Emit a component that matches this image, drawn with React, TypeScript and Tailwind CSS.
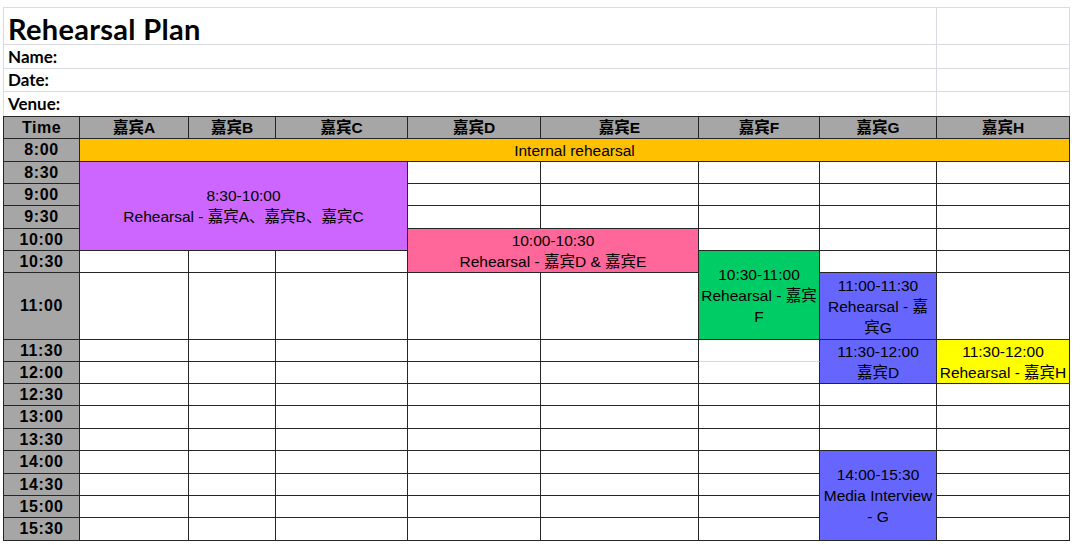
const COL = ['', 'col-start-1', 'col-start-2', 'col-start-3', 'col-start-4', 'col-start-5', 'col-start-6', 'col-start-7', 'col-start-8', 'col-start-9'];
const ROW = ['', 'row-start-1', 'row-start-2', 'row-start-3', 'row-start-4', 'row-start-5', 'row-start-6', 'row-start-7', 'row-start-8', 'row-start-9', 'row-start-10', 'row-start-11', 'row-start-12', 'row-start-13', 'row-start-14', 'row-start-15', 'row-start-16', 'row-start-17'];

const guests = ['嘉宾A', '嘉宾B', '嘉宾C', '嘉宾D', '嘉宾E', '嘉宾F', '嘉宾G', '嘉宾H'];
const times = ['8:00', '8:30', '9:00', '9:30', '10:00', '10:30', '11:00', '11:30', '12:00', '12:30', '13:00', '13:30', '14:00', '14:30', '15:00', '15:30'];

interface Block {
  c: number;
  cs: number;
  r: number;
  rs: number;
  cls: string;
  lines: string[];
}

// r/c are grid lines: row 1 = header, row 2 = 8:00 ...
const blocks: Block[] = [
  { c: 2, cs: 8, r: 2, rs: 1, cls: 'col-start-2 col-span-8 row-start-2 bg-[#ffc000]', lines: ['Internal rehearsal'] },
  { c: 2, cs: 3, r: 3, rs: 4, cls: 'col-start-2 col-span-3 row-start-3 row-span-4 bg-[#cc66ff]', lines: ['8:30-10:00', 'Rehearsal - 嘉宾A、嘉宾B、嘉宾C'] },
  { c: 5, cs: 2, r: 6, rs: 2, cls: 'col-start-5 col-span-2 row-start-6 row-span-2 bg-[#ff6699]', lines: ['10:00-10:30', 'Rehearsal - 嘉宾D & 嘉宾E'] },
  { c: 7, cs: 1, r: 7, rs: 2, cls: 'col-start-7 row-start-7 row-span-2 bg-[#00cc66]', lines: ['10:30-11:00', 'Rehearsal - 嘉宾F'] },
  { c: 8, cs: 1, r: 8, rs: 1, cls: 'col-start-8 row-start-8 bg-[#6666ff]', lines: ['11:00-11:30', 'Rehearsal - 嘉宾G'] },
  { c: 8, cs: 1, r: 9, rs: 2, cls: 'col-start-8 row-start-9 row-span-2 bg-[#6666ff]', lines: ['11:30-12:00', '嘉宾D'] },
  { c: 9, cs: 1, r: 9, rs: 2, cls: 'col-start-9 row-start-9 row-span-2 bg-[#ffff00] whitespace-nowrap overflow-hidden', lines: ['11:30-12:00', 'Rehearsal - 嘉宾H'] },
  { c: 8, cs: 1, r: 14, rs: 4, cls: 'col-start-8 row-start-14 row-span-4 bg-[#6666ff]', lines: ['14:00-15:30', 'Media Interview - G'] },
];

const taken = (r: number, c: number) =>
  blocks.some((b) => r >= b.r && r < b.r + b.rs && c >= b.c && c < b.c + b.cs);

const cellFont = { fontFamily: '"Liberation Sans", "Noto Sans CJK SC", Arial, sans-serif' };

export default function App() {
  const empties: { r: number; c: number }[] = [];
  for (let r = 2; r <= 17; r++) {
    for (let c = 2; c <= 9; c++) {
      if (!taken(r, c)) empties.push({ r, c });
    }
  }

  return (
    <div className="w-[1080px] h-[545px] bg-white pl-[3px] pt-[7px] text-black" style={cellFont}>
      {/* Sheet heading */}
      <div className="w-[1067px] border-l border-t border-[#dadae3] font-['Lato','Noto_Sans_CJK_SC',sans-serif]">
        <div className="grid grid-cols-[933px_133px]">
          <div className="h-[37px] border-r border-b border-[#dadae3] pl-[4px] flex items-end pb-[1px] text-[29px] font-bold leading-none tracking-[0.3px]">
            Rehearsal Plan
          </div>
          <div className="h-[37px] border-r border-b border-[#dadae3]"></div>
          <div className="h-[24px] border-r border-b border-[#dadae3] pl-[4px] flex items-center text-[17px] font-bold">Name:</div>
          <div className="h-[24px] border-r border-b border-[#dadae3]"></div>
          <div className="h-[23px] border-r border-b border-[#dadae3] pl-[4px] flex items-center text-[17px] font-bold">Date:</div>
          <div className="h-[23px] border-r border-b border-[#dadae3]"></div>
          <div className="h-[24px] border-r border-[#dadae3] pl-[4px] flex items-center text-[17px] font-bold">Venue:</div>
          <div className="h-[24px] border-r border-[#dadae3]"></div>
        </div>
      </div>

      {/* Schedule grid */}
      <div className="w-[1067px] grid grid-cols-[76px_109px_87px_132px_133px_158px_121px_117px_133px] grid-rows-[22px_23px_22px_22px_23px_22px_22px_67px_22px_22px_22px_23px_22px_23px_22px_22px_23px] border-l border-t border-[#262626]">
        <div className="col-start-1 row-start-1 bg-[#a6a6a6] border-r border-b border-[#262626] flex items-center justify-center text-[16px] font-bold tracking-[0.5px]">
          Time
        </div>
        {guests.map((g, i) => (
          <div
            key={g}
            className={`${COL[i + 2]} row-start-1 bg-[#a6a6a6] border-r border-b border-[#262626] flex items-center justify-center text-[15.5px] font-bold`}
          >
            {g}
          </div>
        ))}

        {times.map((t, i) => (
          <div
            key={t}
            className={`col-start-1 ${ROW[i + 2]} bg-[#a6a6a6] border-r border-b border-[#262626] flex items-center justify-center text-[16px] font-bold tracking-[0.6px]`}
          >
            {t}
          </div>
        ))}

        {empties.map(({ r, c }) => (
          <div
            key={`${r}-${c}`}
            className={`${COL[c]} ${ROW[r]} bg-white border-r border-b ${
              c === 7 && r === 9 ? 'border-r-[#262626] border-b-[#d9d9d9]' : 'border-[#262626]'
            }`}
          ></div>
        ))}

        {blocks.map((b) => (
          <div
            key={b.cls}
            className={`${b.cls} border-r border-b border-[#262626] flex flex-col items-center justify-center text-center px-[2px] text-[15.5px] leading-[21px]`}
          >
            {b.lines.map((l) => (
              <div key={l}>{l}</div>
            ))}
          </div>
        ))}
      </div>
    </div>
  );
}
